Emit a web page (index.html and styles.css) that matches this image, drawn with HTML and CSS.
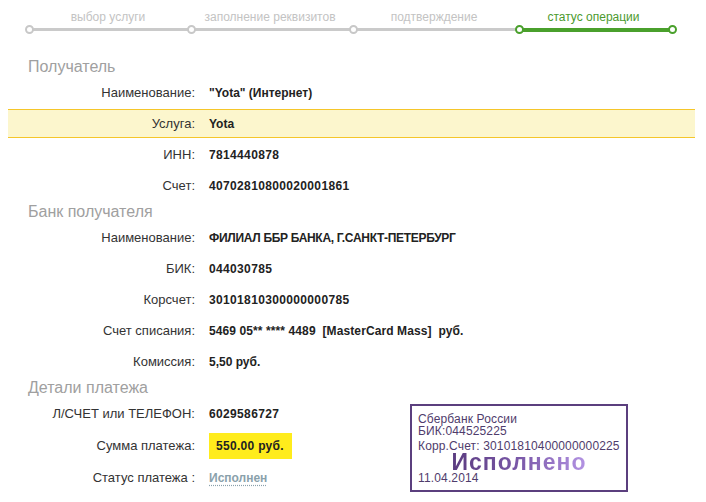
FILE: index.html
```html
<!DOCTYPE html>
<html lang="ru">
<head>
<meta charset="utf-8">
<title>Статус операции</title>
<link rel="stylesheet" href="styles.css">
</head>
<body>
<div class="page">
  <div class="steps">
    <div class="step s1"><div class="step-label">выбор услуги</div><div class="track"><span class="dot"></span></div></div>
    <div class="step s2"><div class="step-label">заполнение реквизитов</div><div class="track"><span class="dot"></span></div></div>
    <div class="step s3"><div class="step-label">подтверждение</div><div class="track"><span class="dot"></span></div></div>
    <div class="step s4 active"><div class="step-label">статус операции</div><div class="track"><span class="dot"></span><span class="dot end"></span></div></div>
  </div>

  <section class="block first">
    <h2 class="block-title">Получатель</h2>
    <div class="row"><div class="label">Наименование:</div><div class="value">"Yota" (Интернет)</div></div>
    <div class="row hl"><div class="label">Услуга:</div><div class="value">Yota</div></div>
    <div class="row"><div class="label">ИНН:</div><div class="value num">7814440878</div></div>
    <div class="row"><div class="label">Счет:</div><div class="value num">40702810800020001861</div></div>
  </section>

  <section class="block">
    <h2 class="block-title">Банк получателя</h2>
    <div class="row"><div class="label">Наименование:</div><div class="value tight">ФИЛИАЛ ББР БАНКА, Г.САНКТ-ПЕТЕРБУРГ</div></div>
    <div class="row"><div class="label">БИК:</div><div class="value num">044030785</div></div>
    <div class="row"><div class="label">Корсчет:</div><div class="value num">30101810300000000785</div></div>
    <div class="row"><div class="label">Счет списания:</div><div class="value pre">5469 05** **** 4489  [MasterCard Mass]  руб.</div></div>
    <div class="row"><div class="label">Комиссия:</div><div class="value">5,50 руб.</div></div>
  </section>

  <section class="block">
    <h2 class="block-title">Детали платежа</h2>
    <div class="block-body">
      <div class="rows">
        <div class="row"><div class="label">Л/СЧЕТ или ТЕЛЕФОН:</div><div class="value num">6029586727</div></div>
        <div class="row tall"><div class="label">Сумма платежа:</div><div class="value"><span class="amount">550.00 руб.</span></div></div>
        <div class="row"><div class="label">Статус платежа :</div><div class="value"><span class="status">Исполнен</span></div></div>
      </div>
      <div class="stamp">
        <div class="stamp-line">Сбербанк России</div>
        <div class="stamp-line">БИК:044525225</div>
        <div class="stamp-line gap">Корр.Счет: 30101810400000000225</div>
        <div class="stamp-mark"><span class="stamp-word">Исполнено</span></div>
        <div class="stamp-line">11.04.2014</div>
      </div>
    </div>
  </section>
</div>
</body>
</html>
```

FILE: styles.css
```css
* { box-sizing: border-box; }

html, body {
  margin: 0;
  padding: 0;
  background: #ffffff;
}

body {
  padding: 8px;
  font-family: "Liberation Sans", Arial, sans-serif;
  color: #333333;
}

.page {
  width: 687px;
}

/* progress steps */
.steps {
  display: grid;
  grid-template-columns: 162px 162px 166px 153px;
  margin-left: 21px;
}

.step {
  display: flex;
  flex-direction: column;
}

.step-label {
  margin-top: 1px;
  height: 16px;
  line-height: 16px;
  font-size: 12px;
  color: #c3c3c3;
  text-align: center;
  padding-right: 4px;
  white-space: nowrap;
}

.track {
  position: relative;
  height: 9px;
}

.track::before {
  content: "";
  position: absolute;
  left: 0;
  right: 0;
  top: 3px;
  height: 3px;
  background: #cacaca;
}

.dot {
  position: absolute;
  left: -4px;
  top: 0;
  width: 9px;
  height: 9px;
  border-radius: 50%;
  border: 2px solid #c8c8c8;
  background: #ffffff;
  z-index: 1;
}

.dot.end {
  left: auto;
  right: -5px;
}

.step.active .step-label {
  color: #4c9a2e;
}

.step.active .track::before {
  top: 2.5px;
  height: 4px;
  background: #4aa02c;
}

.step.active .dot {
  border-color: #4aa02c;
}

/* sections */
.block-title {
  margin: 0;
  height: 23px;
  line-height: 24px;
  padding-left: 20px;
  font-size: 16px;
  font-weight: normal;
  color: #a0a0a0;
}

.block.first {
  margin-top: 21px;
}

.row {
  display: grid;
  grid-template-columns: 187px 1fr;
  column-gap: 14px;
  align-items: center;
  height: 29px;
  border-top: 1px solid transparent;
  border-bottom: 1px solid transparent;
}

.row + .row {
  margin-top: 2px;
}

.row.tall {
  height: 31px;
}

.row.hl {
  background: #fcf6cd;
  border-top-color: #f5c62a;
  border-bottom-color: #f5c62a;
}

.label {
  text-align: right;
  font-size: 13px;
  color: #333333;
  white-space: nowrap;
}

.value {
  font-size: 12px;
  font-weight: bold;
  color: #222222;
  white-space: nowrap;
}

.value.num {
  letter-spacing: 0.35px;
}

.value.tight {
  letter-spacing: -0.3px;
}

.value.pre {
  white-space: pre;
  letter-spacing: 0.1px;
}

.amount {
  display: inline-block;
  background: #ffec1c;
  padding: 5px 8px 5px 7px;
  line-height: 16px;
  letter-spacing: 0.3px;
}

.status {
  color: #8aa1ab;
  text-decoration: underline dotted #8aa1ab;
  text-underline-offset: 3px;
}

.block-body {
  display: flex;
  align-items: flex-start;
}

.rows {
  width: 402px;
}

.stamp {
  margin-top: 5px;
  width: 218px;
  height: 88px;
  border: 2px solid #5b3f7e;
  padding: 7px 6px 6px 6px;
  color: #4f3c6c;
  font-size: 12px;
}

.stamp-line {
  line-height: 12px;
  white-space: nowrap;
  letter-spacing: 0.15px;
}

.stamp-line.gap {
  margin-top: 3px;
}

.stamp-mark {
  height: 20px;
  line-height: 20px;
  text-align: center;
}

.stamp-word {
  display: inline-block;
  font-size: 23px;
  font-weight: bold;
  letter-spacing: 1px;
  background: linear-gradient(90deg, #5b3c80 0%, #7a58a8 50%, #b393e3 100%);
  -webkit-background-clip: text;
  background-clip: text;
  color: transparent;
}
```
